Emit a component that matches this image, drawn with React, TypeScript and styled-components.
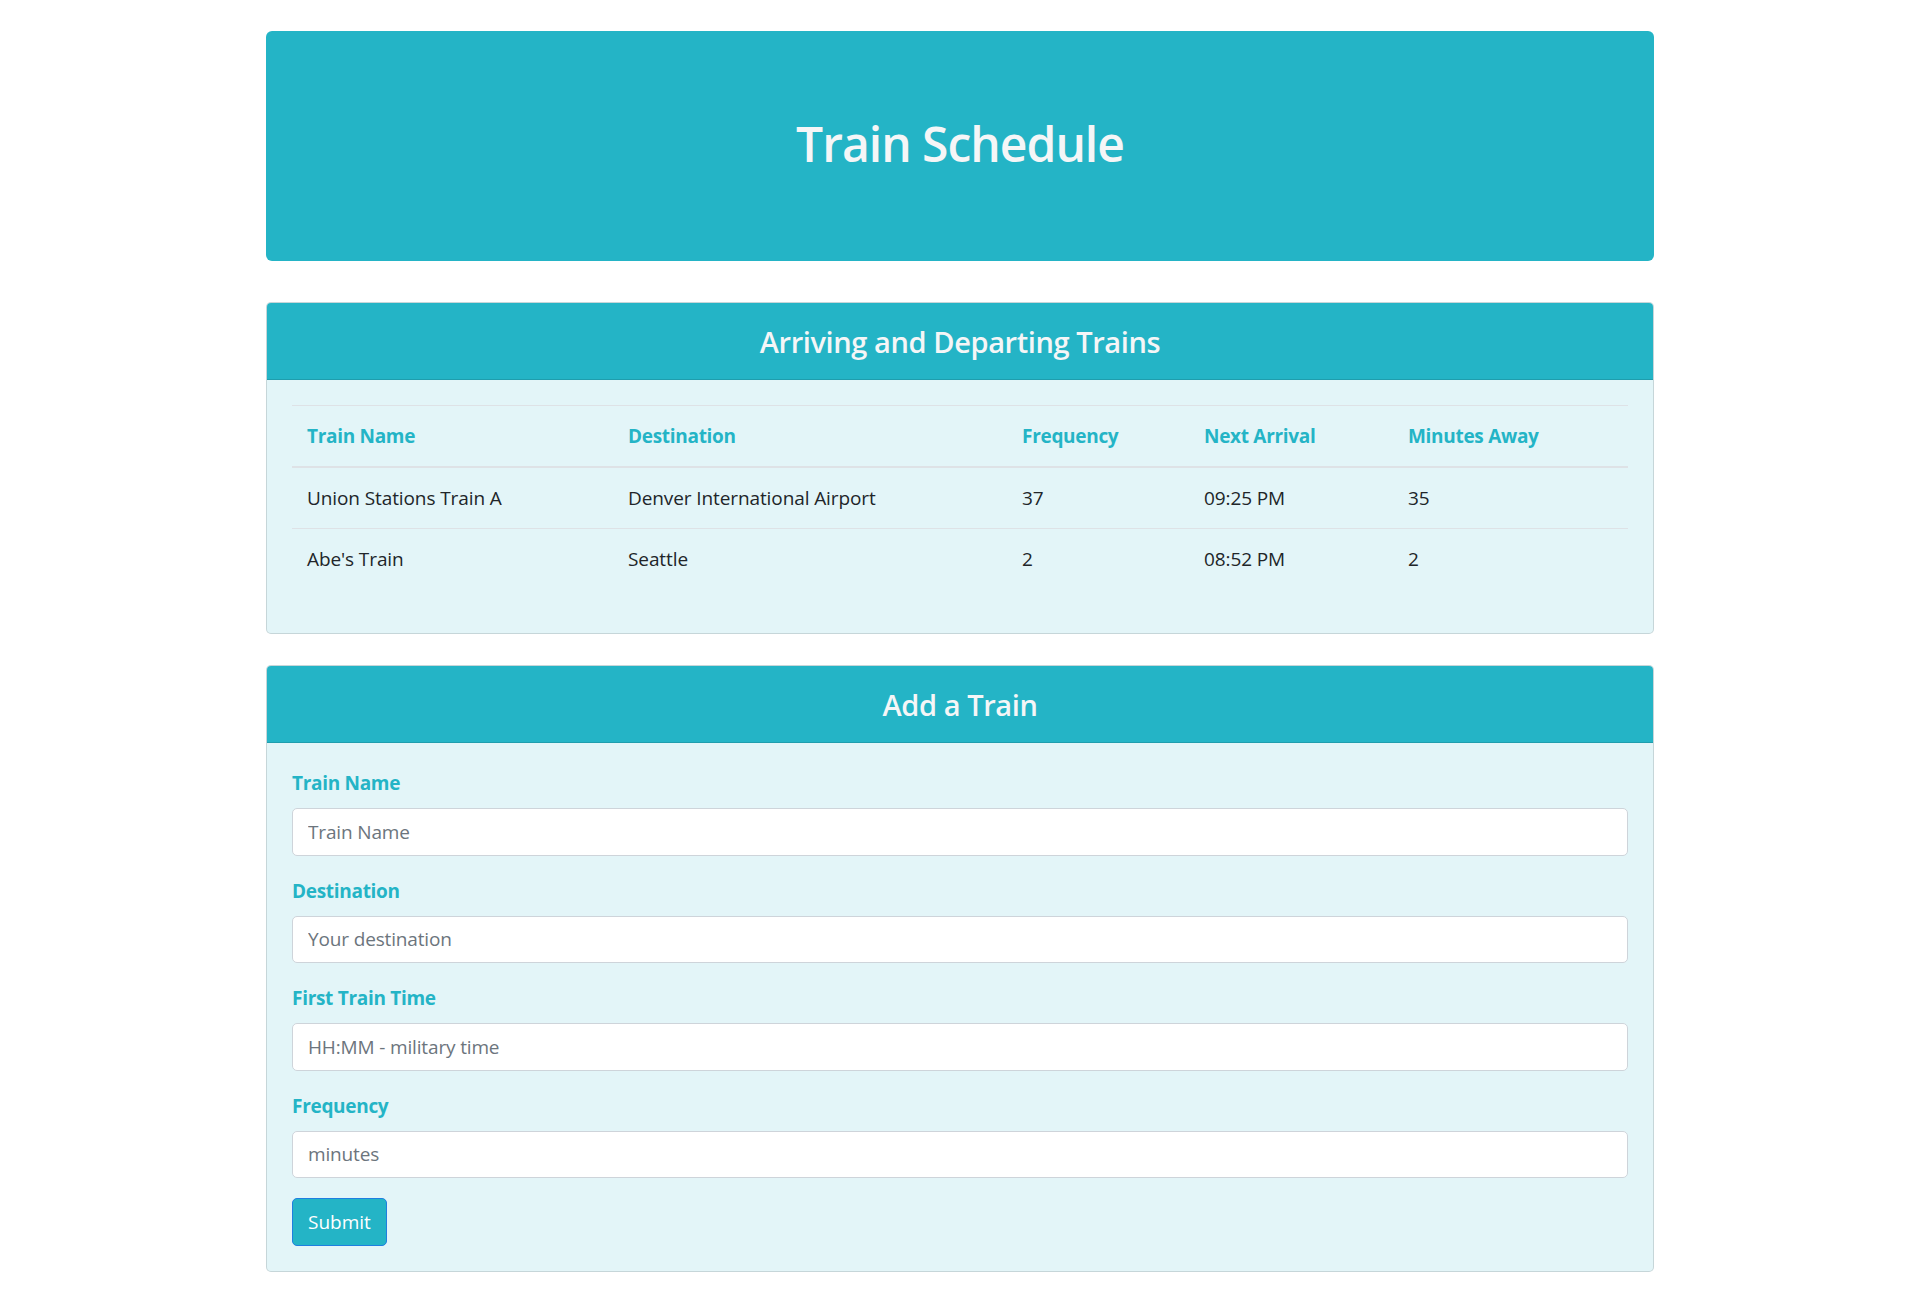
import React from "react";
import styled, { createGlobalStyle } from "styled-components";

const TEAL = "#24b4c6";

const GlobalStyle = createGlobalStyle`
  html, body { margin: 0; padding: 0; background: #ffffff; }
  body {
    font-family: "Open Sans", "Noto Sans", "Liberation Sans", sans-serif;
    font-size: 19px;
    line-height: 1.5;
    color: #212529;
  }
  *, *::before, *::after { box-sizing: border-box; }
`;

const Container = styled.div`
  max-width: 1426px;
  margin: 0 auto;
  padding: 31px 19px 31px;
`;

const Jumbotron = styled.header`
  background: ${TEAL};
  border-radius: 6px;
  padding: 83px 40px 77px;
  margin-bottom: 41px;
  text-align: center;
`;

const Title = styled.h1`
  margin: 0 0 10px;
  font-size: 48px;
  line-height: 60px;
  font-weight: 600;
  letter-spacing: -1px;
  color: #f5f6f7;
`;

const Card = styled.section<{ $gap?: number }>`
  background: #e3f5f8;
  border: 1px solid rgba(0, 0, 0, 0.125);
  border-radius: 5px;
  overflow: hidden;
  margin-top: ${(p) => p.$gap ?? 0}px;
`;

const CardHeader = styled.div`
  background: ${TEAL};
  padding: 21px 25px 19px;
  border-bottom: 1px solid rgba(0, 0, 0, 0.125);
  text-align: center;
`;

const CardTitle = styled.h4`
  margin: 0;
  font-size: 29px;
  line-height: 36px;
  font-weight: 600;
  letter-spacing: -0.4px;
  color: #f5f6f7;
`;

const CardBody = styled.div`
  padding: 25px;
`;

const Table = styled.table`
  width: 100%;
  border-collapse: collapse;
  margin-bottom: 19px;
  table-layout: fixed;
`;

const Th = styled.th`
  text-align: left;
  padding: 15px;
  line-height: 30px;
  font-weight: 700;
  letter-spacing: -0.3px;
  color: ${TEAL};
  border-top: 1px solid #dee2e6;
  border-bottom: 2px solid #dee2e6;
`;

const Td = styled.td`
  padding: 15px;
  line-height: 30px;
  letter-spacing: -0.1px;
  border-top: 1px solid #dee2e6;
`;

const FormGroup = styled.div`
  margin-bottom: 20px;
`;

const Label = styled.label`
  display: block;
  margin-bottom: 10px;
  line-height: 30px;
  font-weight: 700;
  letter-spacing: -0.3px;
  color: ${TEAL};
`;

const Input = styled.input`
  display: block;
  width: 100%;
  height: 47.5px;
  padding: 7px 15px;
  font-family: inherit;
  font-size: 19px;
  line-height: 30px;
  letter-spacing: -0.15px;
  color: #495057;
  background: #ffffff;
  border: 1px solid #ced4da;
  border-radius: 5px;
  &::placeholder { color: #6c757d; opacity: 1; }
`;

const Button = styled.button`
  display: inline-block;
  height: 47.5px;
  font-family: inherit;
  font-size: 19px;
  line-height: 30px;
  padding: 7px 15px;
  color: #ffffff;
  background: ${TEAL};
  border: 1px solid #1f7fe0;
  border-radius: 5px;
  cursor: pointer;
`;

const columns = [
  { label: "Train Name", width: 321 },
  { label: "Destination", width: 394 },
  { label: "Frequency", width: 182 },
  { label: "Next Arrival", width: 204 },
  { label: "Minutes Away", width: 235 },
];

const trains = [
  ["Union Stations Train A", "Denver International Airport", "37", "09:25 PM", "35"],
  ["Abe's Train", "Seattle", "2", "08:52 PM", "2"],
];

const fields = [
  { id: "name", label: "Train Name", placeholder: "Train Name" },
  { id: "dest", label: "Destination", placeholder: "Your destination" },
  { id: "first", label: "First Train Time", placeholder: "HH:MM - military time" },
  { id: "freq", label: "Frequency", placeholder: "minutes" },
];

export default function App() {
  return (
    <>
      <GlobalStyle />
      <Container>
        <Jumbotron>
          <Title>Train Schedule</Title>
        </Jumbotron>

        <Card>
          <CardHeader>
            <CardTitle>Arriving and Departing Trains</CardTitle>
          </CardHeader>
          <CardBody>
            <Table>
              <colgroup>
                {columns.map((c) => (
                  <col key={c.label} style={{ width: c.width }} />
                ))}
              </colgroup>
              <thead>
                <tr>
                  {columns.map((c) => (
                    <Th key={c.label}>{c.label}</Th>
                  ))}
                </tr>
              </thead>
              <tbody>
                {trains.map((row) => (
                  <tr key={row[0]}>
                    {row.map((cell, i) => (
                      <Td key={i}>{cell}</Td>
                    ))}
                  </tr>
                ))}
              </tbody>
            </Table>
          </CardBody>
        </Card>

        <Card $gap={31}>
          <CardHeader>
            <CardTitle>Add a Train</CardTitle>
          </CardHeader>
          <CardBody>
            {fields.map((f) => (
              <FormGroup key={f.id}>
                <Label htmlFor={f.id}>{f.label}</Label>
                <Input id={f.id} type="text" placeholder={f.placeholder} />
              </FormGroup>
            ))}
            <Button type="submit">Submit</Button>
          </CardBody>
        </Card>
      </Container>
    </>
  );
}
